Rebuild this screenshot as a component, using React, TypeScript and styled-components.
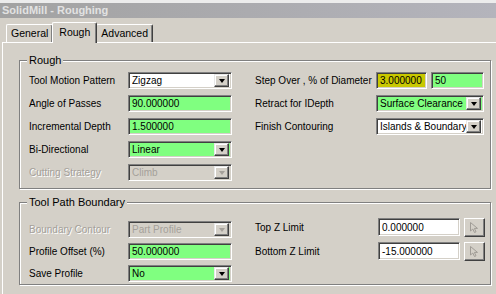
import React from "react";
import styled, { createGlobalStyle } from "styled-components";

const Global = createGlobalStyle`
  html, body { margin: 0; padding: 0; background: #d4d0c8; }
  body { width: 496px; height: 294px; overflow: hidden; font-family: "Liberation Sans", Arial, sans-serif; font-size: 10px; color: #000; }
`;

const Window = styled.div`
  width: 496px;
  height: 294px;
  display: flex;
  flex-direction: column;
  background: #d4d0c8;
`;

const TitleBar = styled.div`
  height: 15px;
  border-top: 3px solid #ececec;
  background: linear-gradient(to right, #a2a2a2, #b4b4bc);
  color: #e2e2e2;
  font-weight: bold;
  font-size: 11px;
  line-height: 15px;
  padding-left: 2px;
`;

const TabStrip = styled.div`
  display: flex;
  align-items: flex-end;
  padding: 4px 0 0 6px;
  height: 20px;
`;

const Tab = styled.div<{ $active?: boolean }>`
  height: ${(p) => (p.$active ? 20 : 17)}px;
  padding: 0 ${(p) => (p.$active ? 6 : 4)}px;
  margin: 0 ${(p) => (p.$active ? -1 : 0)}px ${(p) => (p.$active ? -1 : 0)}px;
  border-top: 1px solid #fff;
  border-left: 1px solid #fff;
  border-right: 1px solid #404040;
  box-shadow: inset -1px 0 #808080;
  border-radius: 2px 2px 0 0;
  background: #d4d0c8;
  font-size: 10.5px;
  line-height: ${(p) => (p.$active ? 19 : 17)}px;
  position: relative;
  z-index: ${(p) => (p.$active ? 2 : 1)};
`;

const Panel = styled.div`
  flex: 1;
  margin-left: 2px;
  border-top: 1px solid #fff;
  border-left: 1px solid #fff;
  padding: 17px 5px 0 16px;
  display: flex;
  flex-direction: column;
  gap: 13px;
`;

const Group = styled.div<{ $h: number; $pt: number }>`
  position: relative;
  height: ${(p) => p.$h}px;
  box-sizing: border-box;
  border: 1px solid #808080;
  box-shadow: inset 1px 1px #fff, 1px 1px #fff;
  padding: ${(p) => p.$pt}px 5px 0 9px;
  display: flex;
  gap: 23px;
`;

const Legend = styled.span`
  position: absolute;
  top: -7px;
  left: 7px;
  padding: 0 2px;
  background: #d4d0c8;
  font-size: 11px;
  line-height: 12px;
`;

const Column = styled.div<{ $gap: number; $mt?: number }>`
  display: flex;
  flex-direction: column;
  gap: ${(p) => p.$gap}px;
  margin-top: ${(p) => p.$mt ?? 0}px;
`;

const Row = styled.div<{ $label: number; $h?: number }>`
  display: grid;
  grid-template-columns: ${(p) => p.$label}px auto;
  align-items: center;
  height: ${(p) => p.$h ?? 17}px;
`;

const Label = styled.span<{ $disabled?: boolean }>`
  font-size: 10px;
  white-space: nowrap;
  color: ${(p) => (p.$disabled ? "#a4a09a" : "#000")};
  text-shadow: ${(p) => (p.$disabled ? "1px 1px #fff" : "none")};
`;

const Sunken = styled.div<{ $w: number; $bg: string; $disabled?: boolean; $h?: number }>`
  width: ${(p) => p.$w}px;
  height: ${(p) => p.$h ?? 17}px;
  box-sizing: border-box;
  border-top: 1px solid #808080;
  border-left: 1px solid #808080;
  border-right: 1px solid #fff;
  border-bottom: 1px solid #fff;
  box-shadow: inset 1px 1px #404040, inset -1px -1px #d4d0c8;
  background: ${(p) => p.$bg};
  color: ${(p) => (p.$disabled ? "#a4a09a" : "#000")};
  display: flex;
  align-items: center;
  padding-left: 3px;
  padding-right: 2px;
  font-size: 10px;
  white-space: nowrap;
  overflow: hidden;
`;

const ComboText = styled.span`
  flex: 1;
  overflow: hidden;
`;

const DropButton = styled.div`
  flex: none;
  width: 15px;
  height: 13px;
  box-sizing: border-box;
  background: #d4d0c8;
  border-top: 1px solid #e8e8e8;
  border-left: 1px solid #e8e8e8;
  border-right: 1px solid #404040;
  border-bottom: 1px solid #404040;
  box-shadow: inset -1px -1px #808080, inset 1px 1px #fff;
  display: flex;
  align-items: center;
  justify-content: center;
`;

const Arrow = styled.div<{ $disabled?: boolean }>`
  width: 0;
  height: 0;
  border-left: 3px solid transparent;
  border-right: 3px solid transparent;
  border-top: 4px solid ${(p) => (p.$disabled ? "#a4a09a" : "#000")};
`;

const Pair = styled.div`
  display: flex;
  gap: 4px;
`;

const PickButton = styled.div`
  width: 21px;
  height: 19px;
  box-sizing: border-box;
  background: #d4d0c8;
  border-top: 1px solid #fff;
  border-left: 1px solid #fff;
  border-right: 1px solid #404040;
  border-bottom: 1px solid #404040;
  box-shadow: inset -1px -1px #808080;
  display: flex;
  align-items: center;
  justify-content: center;
`;

const GREEN = "#80ff80";
const YELLOW = "#c8c800";
const WHITE = "#fff";
const GRAY = "#d4d0c8";

function Combo({ w, bg, text, disabled }: { w: number; bg: string; text: string; disabled?: boolean }) {
  return (
    <Sunken $w={w} $bg={bg} $disabled={disabled}>
      <ComboText>{text}</ComboText>
      <DropButton>
        <Arrow $disabled={disabled} />
      </DropButton>
    </Sunken>
  );
}

function Pointer() {
  return (
    <svg width="11" height="13" viewBox="0 0 11 13">
      <path d="M1.5 1.5 L1.5 10 L3.8 8 L5.5 11.5 L7 10.8 L5.4 7.4 L8.5 7.4 Z" fill="#d4d0c8" stroke="#a09c96" strokeWidth="1" />
    </svg>
  );
}

export default function App() {
  return (
    <Window>
      <Global />
      <TitleBar>SolidMill - Roughing</TitleBar>
      <TabStrip>
        <Tab>General</Tab>
        <Tab $active>Rough</Tab>
        <Tab>Advanced</Tab>
      </TabStrip>
      <Panel>
        <Group $h={129} $pt={11}>
          <Legend>Rough</Legend>
          <Column $gap={6}>
            <Row $label={99}>
              <Label>Tool Motion Pattern</Label>
              <Combo w={104} bg={WHITE} text="Zigzag" />
            </Row>
            <Row $label={99}>
              <Label>Angle of Passes</Label>
              <Sunken $w={104} $bg={GREEN}>90.000000</Sunken>
            </Row>
            <Row $label={99}>
              <Label>Incremental Depth</Label>
              <Sunken $w={104} $bg={GREEN}>1.500000</Sunken>
            </Row>
            <Row $label={99}>
              <Label>Bi-Directional</Label>
              <Combo w={104} bg={GREEN} text="Linear" />
            </Row>
            <Row $label={99}>
              <Label $disabled>Cutting Strategy</Label>
              <Combo w={104} bg={GRAY} text="Climb" disabled />
            </Row>
          </Column>
          <Column $gap={6}>
            <Row $label={121}>
              <Label>Step Over , % of Diameter</Label>
              <Pair>
                <Sunken $w={51} $bg={YELLOW}>3.000000</Sunken>
                <Sunken $w={53} $bg={GREEN}>50</Sunken>
              </Pair>
            </Row>
            <Row $label={121}>
              <Label>Retract for IDepth</Label>
              <Combo w={108} bg={GREEN} text="Surface Clearance" />
            </Row>
            <Row $label={121}>
              <Label>Finish Contouring</Label>
              <Combo w={108} bg={WHITE} text="Islands & Boundary" />
            </Row>
          </Column>
        </Group>
        <Group $h={83} $pt={17}>
          <Legend>Tool Path Boundary</Legend>
          <Column $gap={5} $mt={1}>
            <Row $label={99}>
              <Label $disabled>Boundary Contour</Label>
              <Combo w={104} bg={GRAY} text="Part Profile" disabled />
            </Row>
            <Row $label={99}>
              <Label>Profile Offset (%)</Label>
              <Sunken $w={104} $bg={GREEN}>50.000000</Sunken>
            </Row>
            <Row $label={99}>
              <Label>Save Profile</Label>
              <Combo w={104} bg={GREEN} text="No" />
            </Row>
          </Column>
          <Column $gap={5} $mt={-2}>
            <Row $label={123} $h={19}>
              <Label>Top Z Limit</Label>
              <Pair>
                <Sunken $w={82} $h={18} $bg={WHITE}>0.000000</Sunken>
                <PickButton><Pointer /></PickButton>
              </Pair>
            </Row>
            <Row $label={123} $h={19}>
              <Label>Bottom Z Limit</Label>
              <Pair>
                <Sunken $w={82} $h={18} $bg={WHITE}>-15.000000</Sunken>
                <PickButton><Pointer /></PickButton>
              </Pair>
            </Row>
          </Column>
        </Group>
      </Panel>
    </Window>
  );
}
